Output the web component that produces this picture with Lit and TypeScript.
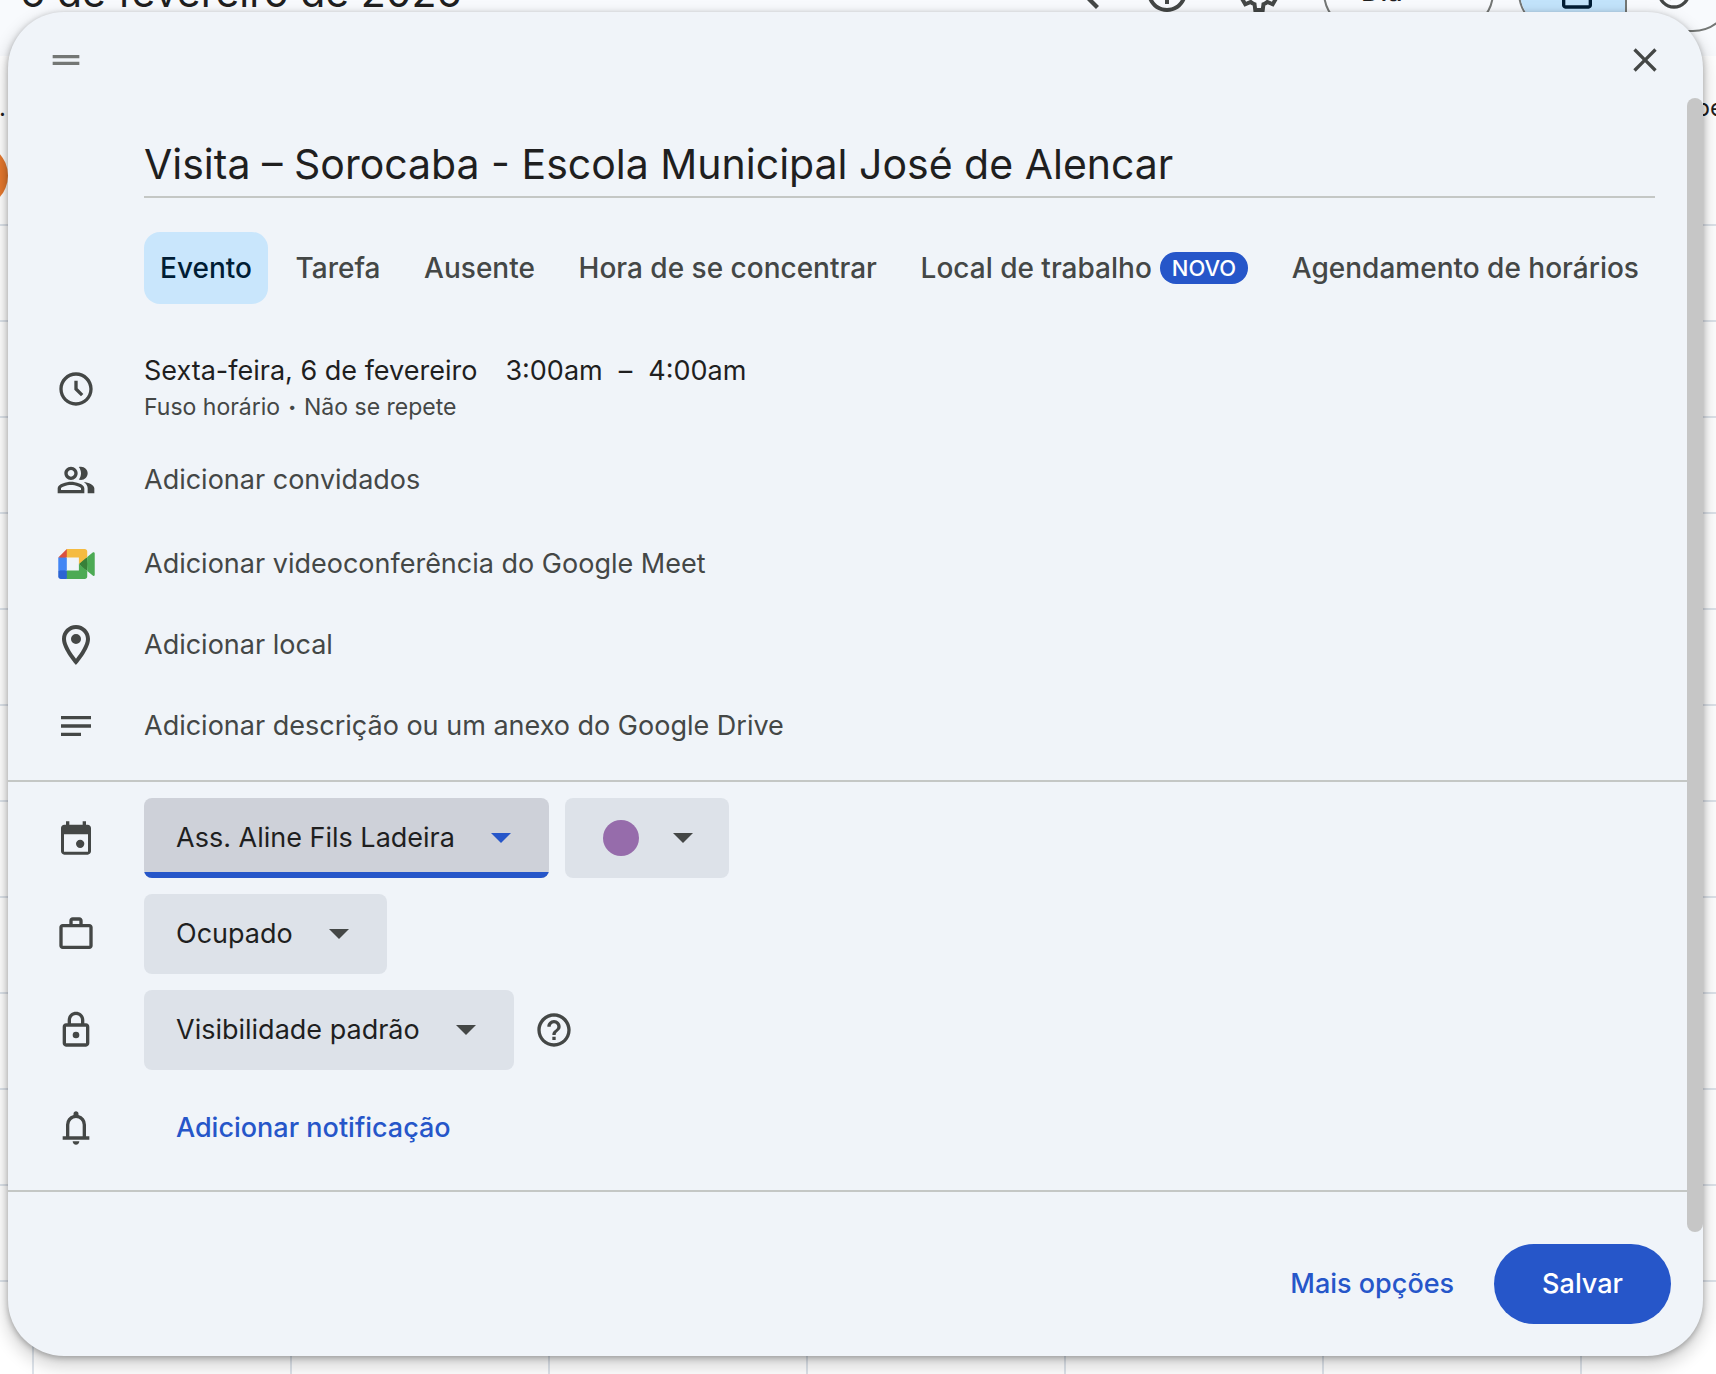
import { LitElement, html, css, nothing } from "lit";
import { customElement, property, state } from "lit/decorators.js";

const ICONS: Record<string, string> = {
  drag: "M4 9h16v2H4zM4 13h16v2H4z",
  close: "M19 6.41 17.59 5 12 10.59 6.41 5 5 6.41 10.59 12 5 17.59 6.41 19 12 13.41 17.59 19 19 17.59 13.41 12z",
  clock:
    "M11.99 2C6.47 2 2 6.48 2 12s4.47 10 9.99 10C17.52 22 22 17.52 22 12S17.52 2 11.99 2zM12 20c-4.42 0-8-3.58-8-8s3.58-8 8-8 8 3.58 8 8-3.58 8-8 8zm1-13h-2v5.4l4 4 1.4-1.4-3.4-3.4z",
  people:
    "M16.67 13.13C18.04 14.06 19 15.32 19 17v3h4v-3c0-2.18-3.57-3.47-6.33-3.87zM15 12c2.21 0 4-1.79 4-4s-1.79-4-4-4c-.47 0-.91.1-1.33.24C14.5 5.27 15 6.58 15 8s-.5 2.73-1.33 3.76c.42.14.86.24 1.33.24zM9 12c2.21 0 4-1.79 4-4s-1.79-4-4-4-4 1.79-4 4 1.79 4 4 4zm0-6c1.1 0 2 .9 2 2s-.9 2-2 2-2-.9-2-2 .9-2 2-2zM9 13c-2.67 0-8 1.34-8 4v3h16v-3c0-2.66-5.33-4-8-4zm6 5H3v-.99C3.2 16.29 6.3 15 9 15s5.8 1.29 6 2z",
  place:
    "M12 2C8.13 2 5 5.13 5 9c0 5.25 7 13 7 13s7-7.75 7-13c0-3.87-3.13-7-7-7zM7 9c0-2.76 2.24-5 5-5s5 2.24 5 5c0 2.88-2.88 7.19-5 9.88C9.92 16.21 7 11.85 7 9zM12 6.5a2.5 2.5 0 1 1 0 5 2.5 2.5 0 0 1 0-5z",
  notes: "M3 18h12v-2H3zM3 6v2h18V6zM3 13h18v-2H3z",
  calendar:
    "M19 4h-1V2h-2v2H8V2H6v2H5c-1.11 0-2 .9-2 2v14c0 1.1.89 2 2 2h14c1.1 0 2-.9 2-2V6c0-1.1-.9-2-2-2zm.2 16.2H4.8V9.7h14.4zM14.5 13a2.5 2.5 0 1 0 0 5 2.5 2.5 0 0 0 0-5z",
  work: "M20 6h-4V4c0-1.11-.89-2-2-2h-4c-1.11 0-2 .89-2 2v2H4c-1.11 0-1.99.89-1.99 2L2 19c0 1.11.89 2 2 2h16c1.11 0 2-.89 2-2V8c0-1.11-.89-2-2-2zm-6 0h-4V4h4zm6 13H4V8h16z",
  lock: "M18 8h-1V6c0-2.76-2.24-5-5-5S7 3.24 7 6v2H6c-1.1 0-2 .9-2 2v10c0 1.1.9 2 2 2h12c1.1 0 2-.9 2-2V10c0-1.1-.9-2-2-2zM9 6c0-1.66 1.34-3 3-3s3 1.34 3 3v2H9zm9 14H6V10h12zM12 13a2 2 0 1 1 0 4 2 2 0 0 1 0-4z",
  bell: "M4 19v-2h2v-7q0-2.075 1.25-3.687T10.5 4.2v-.7q0-.625.438-1.062T12 2t1.063.438T13.5 3.5v.7q2 .5 3.25 2.113T18 10v7h2v2zm8 3q-.825 0-1.412-.587T10 20h4q0 .825-.587 1.413T12 22m-4-5h8v-7q0-1.65-1.175-2.825T12 6 9.175 7.175 8 10z",
  help: "M11 18h2v-2h-2zm1-16C6.48 2 2 6.48 2 12s4.48 10 10 10 10-4.48 10-10S17.52 2 12 2zm0 18c-4.41 0-8-3.59-8-8s3.59-8 8-8 8 3.59 8 8-3.59 8-8 8zm0-14c-2.21 0-4 1.79-4 4h2c0-1.1.9-2 2-2s2 .9 2 2c0 2-3 1.75-3 5h2c0-2.25 3-2.5 3-5 0-2.21-1.79-4-4-4z",
  search:
    "M15.5 14h-.79l-.28-.27A6.471 6.471 0 0 0 16 9.5 6.5 6.5 0 1 0 9.5 16c1.61 0 3.09-.59 4.23-1.57l.27.28v.79l5 4.99L20.49 19zm-6 0C7.01 14 5 11.99 5 9.5S7.01 5 9.5 5 14 7.01 14 9.5 11.99 14 9.5 14z",
  settings:
    "m9.25 22-.4-3.2q-.325-.125-.612-.3t-.563-.375L4.7 19.375l-2.75-4.75 2.575-1.95Q4.5 12.5 4.5 12.338v-.675q0-.163.025-.338L1.95 9.375l2.75-4.75 2.975 1.25q.275-.2.575-.375t.6-.3l.4-3.2h5.5l.4 3.2q.325.125.613.3t.562.375l2.975-1.25 2.75 4.75-2.575 1.95q.025.175.025.338v.674q0 .163-.05.338l2.575 1.95-2.75 4.75-2.95-1.25q-.275.2-.575.375t-.6.3l-.4 3.2zM11 20h1.975l.35-2.65q.775-.2 1.438-.587t1.212-.938l2.475 1.025.975-1.7-2.15-1.625q.125-.35.175-.737T17.5 12t-.05-.787-.175-.738l2.15-1.625-.975-1.7-2.475 1.05q-.55-.575-1.212-.962t-1.438-.588L13 4h-1.975l-.35 2.65q-.775.2-1.437.588t-1.213.937L5.55 7.15l-.975 1.7 2.15 1.6q-.125.375-.175.75t-.05.8q0 .4.05.775t.175.75l-2.15 1.625.975 1.7 2.475-1.05q.55.575 1.213.963t1.437.587z",
  today: "M19 3h-1V1h-2v2H8V1H6v2H5c-1.1 0-2 .9-2 2v15c0 1.1.9 2 2 2h14c1.1 0 2-.9 2-2V5c0-1.1-.9-2-2-2zm0 17H5V9h14z",
  done: "M12 2a10 10 0 1 0 0 20 10 10 0 0 0 0-20zm0 18a8 8 0 1 1 0-16 8 8 0 0 1 0 16zm4.6-12.4L10 14.2l-2.6-2.6L6 13l4 4 8-8z",
};

@customElement("ui-icon")
export class UiIcon extends LitElement {
  @property() name = "";
  static styles = css`
    :host {
      display: block;
      flex: none;
      width: 40px;
      height: 40px;
    }
    .glyph {
      display: block;
      width: 100%;
      height: 100%;
      fill: currentColor;
      fill-rule: evenodd;
    }
  `;
  render() {
    return html`<svg class="glyph" viewBox="0 0 24 24" aria-hidden="true"><path d=${ICONS[this.name] ?? ""}></path></svg>`;
  }
}

@customElement("meet-logo")
export class MeetLogo extends LitElement {
  static styles = css`
    :host {
      display: block;
      width: 37px;
      height: 30px;
    }
    .logo {
      display: block;
      width: 100%;
      height: 100%;
    }
  `;
  render() {
    return html`<svg class="logo" viewBox="0 0 87.5 72" aria-hidden="true">
      <path fill="#388038" d="M49.5 36l8.53 9.75 11.47 7.33 2-17.02-2-16.64-11.69 6.44z" />
      <path fill="#2b64d3" d="M0 51.5V66c0 3.315 2.685 6 6 6h14.5l3-10.96-3-9.54-9.95-3z" />
      <path fill="#d95040" d="M20.5 0L0 20.5l10.55 3 9.95-3 2.95-9.41z" />
      <path fill="#4285f4" d="M20.5 20.5H0v31h20.5z" />
      <path
        fill="#4caa54"
        d="M82.6 8.68L69.5 19.42v33.66l13.16 10.79c1.97 1.54 4.85.135 4.85-2.37V11c0-2.535-2.945-3.925-4.91-2.32zM49.5 36v15.5h-29V72h43c3.315 0 6-2.685 6-6V53.08z"
      />
      <path fill="#f5bb41" d="M63.5 0h-43v20.5h29V36l20-16.57V6c0-3.315-2.685-6-6-6z" />
    </svg>`;
  }
}

@customElement("drop-select")
export class DropSelect extends LitElement {
  @property() label = "";
  @property() value = "";
  @property({ type: Boolean, reflect: true }) active = false;
  static styles = css`
    :host {
      display: grid;
      position: relative;
      color: #444746;
      border-radius: 8px;
      overflow: hidden;
      background: #dde2e9;
    }
    :host([active]) {
      background: #ced1d9;
      color: #2656c9;
    }
    .field {
      appearance: none;
      border: 0;
      outline: 0;
      margin: 0;
      height: 80px;
      padding: 0 94px 0 32px;
      background: transparent;
      color: #1f1f1f;
      font: 400 27px/36px Inter, "Liberation Sans", sans-serif;
    }
    .arrow {
      position: absolute;
      right: 38px;
      top: 35px;
      width: 20px;
      height: 10px;
      fill: currentColor;
      pointer-events: none;
    }
    :host([active])::after {
      content: "";
      position: absolute;
      inset: auto 0 0;
      height: 6px;
      background: #2656c9;
    }
  `;
  render() {
    return html`<select class="field" aria-label=${this.label}>
        <option>${this.value}</option></select
      ><svg class="arrow" viewBox="0 0 20 10" aria-hidden="true"><path d="M0 0h20L10 10z"></path></svg>`;
  }
}

@customElement("calendar-backdrop")
export class CalendarBackdrop extends LitElement {
  static styles = css`
    :host {
      display: flex;
      flex-direction: column;
      background: #fff;
      overflow: hidden;
      color: #1f1f1f;
      font-family: Inter, "Liberation Sans", sans-serif;
    }
    .toolbar {
      flex: none;
      display: flex;
      align-items: center;
      box-sizing: border-box;
      height: 128px;
      margin-top: -72px;
      padding-left: 20px;
      background: #f8fafd;
      color: #444746;
    }
    .heading {
      margin: 0 auto 0 0;
      color: #1f1f1f;
      font-size: 41px;
      line-height: 52px;
      font-weight: 400;
      white-space: nowrap;
    }
    .tools {
      display: flex;
      align-items: center;
      gap: 40px;
      margin-right: -17px;
    }
    .pair {
      display: flex;
      gap: 37px;
      margin-right: 4px;
    }
    .tool,
    .half {
      border: 0;
      margin: 0;
      padding: 0;
      background: none;
      color: inherit;
    }
    .tool ui-icon {
      width: 48px;
      height: 48px;
    }
    .range {
      appearance: none;
      box-sizing: border-box;
      width: 171px;
      height: 80px;
      padding: 0 36px;
      border: 2px solid #747775;
      border-radius: 40px;
      background: transparent;
      color: #1f1f1f;
      font: 500 27px/36px Inter, "Liberation Sans", sans-serif;
    }
    .switch {
      display: flex;
      box-sizing: border-box;
      width: 215px;
      height: 80px;
      margin-left: -16px;
      border: 2px solid #747775;
      border-radius: 40px;
      overflow: hidden;
    }
    .half {
      flex: 1;
      display: grid;
      place-items: center;
      padding-right: 10px;
    }
    .half.on {
      padding: 0 0 0 10px;
      background: #c2e3fb;
      color: #001d35;
      border-right: 2px solid #747775;
    }
    .days {
      flex: none;
      display: flex;
      justify-content: space-between;
      box-sizing: border-box;
      height: 168px;
      padding-top: 36px;
      font-size: 24px;
      line-height: 32px;
    }
    .day {
      display: grid;
      gap: 19px;
      align-content: start;
      justify-items: end;
      margin-left: -57px;
    }
    .dot {
      padding-right: 2px;
    }
    .avatar {
      width: 65px;
      height: 65px;
      border-radius: 50%;
      background: #e5782e;
    }
    .next {
      margin-right: -8px;
    }
    .grid {
      flex: 1;
      background: repeating-linear-gradient(to right, transparent 0 32px, #dde3ea 32px 34px, transparent 34px 258px),
        repeating-linear-gradient(to bottom, #dde3ea 0 2px, transparent 2px 96px);
    }
  `;
  render() {
    return html`
      <header class="toolbar">
        <h1 class="heading">6 de fevereiro de 2026</h1>
        <div class="tools">
          <div class="pair">
            <button class="tool" aria-label="Pesquisar"><ui-icon name="search"></ui-icon></button>
            <button class="tool" aria-label="Ajuda"><ui-icon name="help"></ui-icon></button>
          </div>
          <button class="tool" aria-label="Configurações"><ui-icon name="settings"></ui-icon></button>
          <select class="range" aria-label="Visualização">
            <option>Dia</option>
          </select>
          <div class="switch">
            <button class="half on" aria-label="Agenda"><ui-icon name="today"></ui-icon></button>
            <button class="half" aria-label="Tarefas"><ui-icon name="done"></ui-icon></button>
          </div>
        </div>
      </header>
      <div class="days">
        <div class="day">
          <span class="dot">.</span>
          <span class="avatar"></span>
        </div>
        <span class="next">pe</span>
      </div>
      <div class="grid"></div>
    `;
  }
}

interface Tab {
  label: string;
  badge?: string;
}

const TABS: Tab[] = [
  { label: "Evento" },
  { label: "Tarefa" },
  { label: "Ausente" },
  { label: "Hora de se concentrar" },
  { label: "Local de trabalho", badge: "NOVO" },
  { label: "Agendamento de horários" },
];

@customElement("app-root")
export class AppRoot extends LitElement {
  @state() private tab = 0;

  static styles = css`
    :host {
      display: grid;
      position: relative;
      box-sizing: border-box;
      min-height: 100vh;
      padding: 12px 13px 18px 8px;
      align-items: start;
      overflow: hidden;
      color: #1f1f1f;
      font: 400 27px/36px Inter, "Liberation Sans", sans-serif;
    }
    calendar-backdrop {
      position: absolute;
      inset: 0;
    }
    button {
      margin: 0;
      padding: 0;
      border: 0;
      background: none;
      color: inherit;
      font: inherit;
      text-align: left;
    }
    .dialog {
      position: relative;
      min-width: 0;
      border-radius: 56px;
      background: #f0f4f9;
      box-shadow: 0 8px 16px 4px rgba(0, 0, 0, 0.15), 0 2px 6px rgba(0, 0, 0, 0.3);
    }
    .scroll {
      position: absolute;
      top: 86px;
      right: 0;
      bottom: 124px;
      width: 16px;
      border-radius: 8px;
      background: #c6c6c6;
    }
    .top {
      display: flex;
      align-items: center;
      justify-content: space-between;
      height: 96px;
      padding: 0 38px;
      color: #444746;
    }
    .grip {
      color: #747775;
    }
    .form {
      padding: 24px 48px 0 136px;
    }
    .title {
      display: block;
      box-sizing: border-box;
      width: 100%;
      height: 66px;
      padding: 0;
      border: 0;
      border-bottom: 2px solid #c4c7c5;
      border-radius: 0;
      outline: 0;
      background: transparent;
      color: #1f1f1f;
      font: 400 41px/52px Inter, "Liberation Sans", sans-serif;
    }
    .tabs {
      display: flex;
      justify-content: space-between;
      margin-top: 34px;
    }
    .tab {
      display: flex;
      align-items: center;
      gap: 8px;
      height: 72px;
      padding: 0 16px;
      border-radius: 16px;
      color: #444746;
      font-size: 28px;
      font-weight: 500;
      white-space: nowrap;
    }
    .tab[aria-selected="true"] {
      background: #c9e6fc;
      color: #001d35;
    }
    .badge {
      padding: 0 12px;
      border-radius: 16px;
      background: #2656c9;
      color: #fff;
      font-size: 22px;
      line-height: 32px;
    }
    .row {
      display: grid;
      grid-template-columns: 136px 1fr;
      align-items: center;
      min-height: 84px;
      color: #444746;
    }
    .row > :first-child {
      justify-self: center;
    }
    .row.when {
      min-height: 72px;
      margin: 49px 0 13px;
    }
    .row.short {
      min-height: 78px;
    }
    .row.option {
      min-height: 80px;
      margin-top: 16px;
    }
    .row.notify {
      min-height: 80px;
      margin-top: 18px;
    }
    .place {
      width: 48px;
      height: 48px;
    }
    .line {
      display: flex;
      align-items: center;
    }
    .time {
      gap: 16px;
      color: #1f1f1f;
    }
    .date {
      margin-right: 12px;
    }
    .sub {
      gap: 8px;
      font-size: 23px;
    }
    .bullet {
      font-size: 14px;
    }
    .divider {
      height: 2px;
      margin: 12px 0 0;
      border: 0;
      background: #c4c7c5;
    }
    .divider.last {
      margin-top: 22px;
    }
    .fields {
      gap: 16px;
    }
    .color {
      display: flex;
      align-items: center;
      gap: 34px;
      height: 80px;
      padding: 0 36px 0 38px;
      border-radius: 8px;
      background: #dde2e9;
    }
    .swatch {
      width: 36px;
      height: 36px;
      border-radius: 50%;
      background: #966cab;
    }
    .caret {
      width: 20px;
      height: 10px;
      fill: currentColor;
    }
    .hint {
      margin-left: 4px;
    }
    .link {
      padding: 0 32px;
      color: #2656c9;
      font-weight: 500;
    }
    .footer {
      display: flex;
      justify-content: flex-end;
      gap: 16px;
      padding: 52px 32px 32px;
    }
    .footer button {
      height: 80px;
      padding: 0 24px;
      border-radius: 40px;
      color: #2656c9;
      font-weight: 500;
    }
    .footer .save {
      padding: 0 48px;
      background: #2656c9;
      color: #fff;
    }
  `;

  private addRow(icon: unknown, label: string, size = "") {
    return html`<div class="row ${size}">${icon}<button>${label}</button></div>`;
  }

  render() {
    return html`
      <calendar-backdrop></calendar-backdrop>
      <main class="dialog" role="dialog">
        <div class="top">
          <button class="grip" aria-label="Mover"><ui-icon name="drag"></ui-icon></button>
          <button aria-label="Fechar"><ui-icon name="close"></ui-icon></button>
        </div>
        <div class="form">
          <input class="title" aria-label="Título" .value=${"Visita – Sorocaba - Escola Municipal José de Alencar"} />
          <div class="tabs" role="tablist">
            ${TABS.map(
              (t, i) => html`<button
                class="tab"
                role="tab"
                aria-selected=${i === this.tab ? "true" : "false"}
                @click=${() => (this.tab = i)}
              >
                <span>${t.label}</span>${t.badge ? html`<span class="badge">${t.badge}</span>` : nothing}
              </button>`
            )}
          </div>
        </div>
        <div class="row when">
          <ui-icon name="clock"></ui-icon>
          <div>
            <div class="line time">
              <button class="date">Sexta-feira, 6 de fevereiro</button>
              <button>3:00am</button><span>–</span><button>4:00am</button>
            </div>
            <div class="line sub">
              <button>Fuso horário</button><span class="bullet">•</span><button>Não se repete</button>
            </div>
          </div>
        </div>
        ${this.addRow(html`<ui-icon name="people"></ui-icon>`, "Adicionar convidados")}
        ${this.addRow(html`<meet-logo></meet-logo>`, "Adicionar videoconferência do Google Meet")}
        ${this.addRow(html`<ui-icon class="place" name="place"></ui-icon>`, "Adicionar local", "short")}
        ${this.addRow(html`<ui-icon name="notes"></ui-icon>`, "Adicionar descrição ou um anexo do Google Drive")}
        <hr class="divider" />
        <div class="row option">
          <ui-icon name="calendar"></ui-icon>
          <div class="line fields">
            <drop-select active label="Agenda" value="Ass. Aline Fils Ladeira"></drop-select>
            <button class="color" aria-label="Cor do evento" aria-haspopup="listbox">
              <span class="swatch"></span>
              <svg class="caret" viewBox="0 0 20 10" aria-hidden="true"><path d="M0 0h20L10 10z"></path></svg>
            </button>
          </div>
        </div>
        <div class="row option">
          <ui-icon name="work"></ui-icon>
          <div class="line fields"><drop-select label="Disponibilidade" value="Ocupado"></drop-select></div>
        </div>
        <div class="row option">
          <ui-icon name="lock"></ui-icon>
          <div class="line fields">
            <drop-select label="Visibilidade" value="Visibilidade padrão"></drop-select>
            <button class="hint" aria-label="Ajuda"><ui-icon name="help"></ui-icon></button>
          </div>
        </div>
        <div class="row notify">
          <ui-icon name="bell"></ui-icon>
          <button class="link">Adicionar notificação</button>
        </div>
        <hr class="divider last" />
        <div class="footer">
          <button>Mais opções</button>
          <button class="save">Salvar</button>
        </div>
        <div class="scroll"></div>
      </main>
    `;
  }
}
